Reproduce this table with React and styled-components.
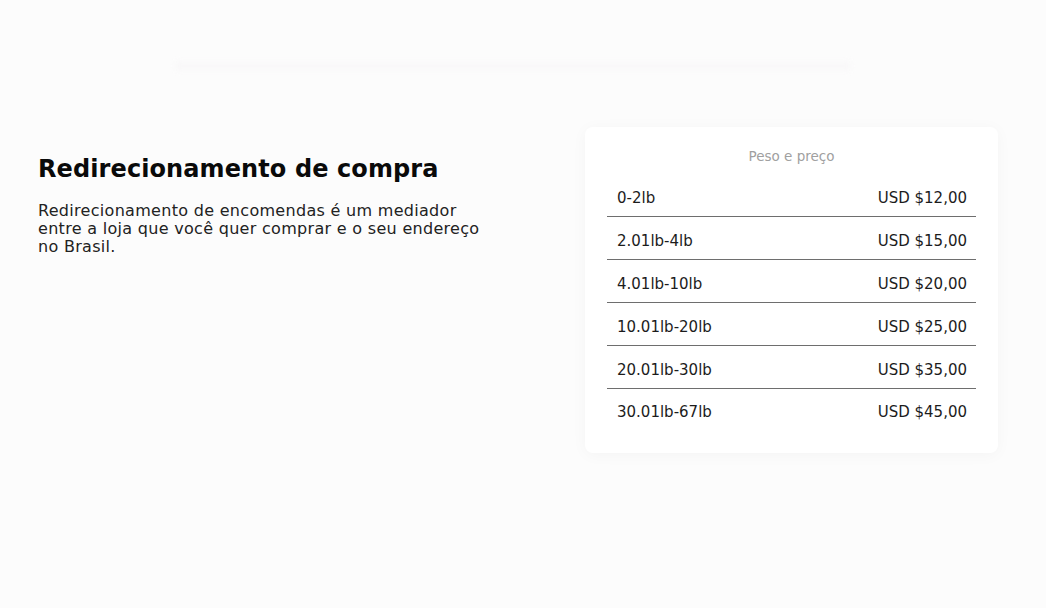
import React from 'react';
import styled, { createGlobalStyle } from 'styled-components';

const GlobalStyle = createGlobalStyle`
  * { box-sizing: border-box; }
  body {
    margin: 0;
    background: #fcfcfc;
    font-family: "DejaVu Sans", "Liberation Sans", sans-serif;
    color: #1c1c1c;
  }
`;

const prices = [
  { weight: '0-2lb', price: 'USD $12,00' },
  { weight: '2.01lb-4lb', price: 'USD $15,00' },
  { weight: '4.01lb-10lb', price: 'USD $20,00' },
  { weight: '10.01lb-20lb', price: 'USD $25,00' },
  { weight: '20.01lb-30lb', price: 'USD $35,00' },
  { weight: '30.01lb-67lb', price: 'USD $45,00' },
];

function App() {
  return (
    <>
      <GlobalStyle />
      <Page>
        <HeaderShade />
        <Content>
          <Info>
            <h2>Redirecionamento de compra</h2>
            <p>
              Redirecionamento de encomendas é um mediador entre a loja que você quer comprar e o seu endereço no Brasil.
            </p>
          </Info>
          <Card>
            <CardTitle>Peso e preço</CardTitle>
            <Table>
              {prices.map((row, index) => (
                <Row key={index} $last={index === prices.length - 1}>
                  <span>{row.weight}</span>
                  <span>{row.price}</span>
                </Row>
              ))}
            </Table>
          </Card>
        </Content>
      </Page>
    </>
  );
}

const Page = styled.div`
  width: 100%;
  min-height: 608px;
  display: flex;
  flex-direction: column;
`;

const HeaderShade = styled.div`
  width: 676px;
  height: 8px;
  margin: 62px auto 0 175px;
  background: #f6f4f6;
  filter: blur(3px);
  opacity: 0.55;
`;

const Content = styled.div`
  display: flex;
  justify-content: space-between;
  align-items: flex-start;
  padding: 0 48px 0 38px;
  margin-top: 57px;
`;

const Info = styled.div`
  width: 445px;
  margin-top: 25px;
  h2 {
    margin: 0;
    font-size: 24px;
    line-height: 34px;
    font-weight: 700;
    letter-spacing: 0.1px;
    color: #0a0a0a;
  }
  p {
    margin: 16px 0 0;
    font-size: 16px;
    line-height: 18px;
    letter-spacing: 0.3px;
    color: #222;
  }
`;

const Card = styled.div`
  width: 413px;
  background: #fff;
  border-radius: 8px;
  padding: 21px 22px 22px;
  box-shadow: 0 2px 16px rgba(0, 0, 0, 0.035);
`;

const CardTitle = styled.div`
  text-align: center;
  font-size: 13.5px;
  line-height: 16px;
  color: #a0a0a0;
`;

const Table = styled.div`
  margin-top: 10px;
  display: flex;
  flex-direction: column;
`;

const Row = styled.div`
  display: flex;
  justify-content: space-between;
  align-items: center;
  height: ${p => (p.$last ? '42px' : '43px')};
  padding: ${p => (p.$last ? '4px' : '6px')} 9px 0 10px;
  font-size: 15px;
  color: #1c1c1c;
  border-bottom: ${p => (p.$last ? 'none' : '1px solid #6e6e6e')};
`;

export default App;
